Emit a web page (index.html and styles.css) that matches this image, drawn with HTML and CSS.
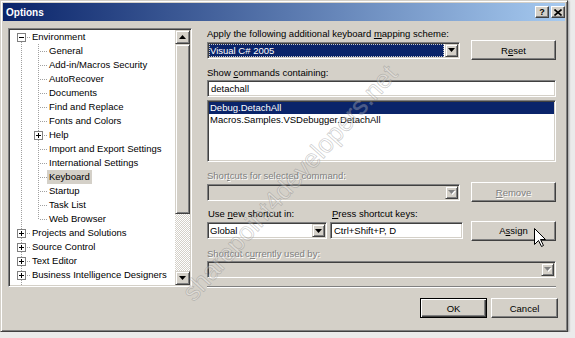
FILE: index.html
```html
<!DOCTYPE html>
<html lang="en">
<head>
  <meta charset="UTF-8">
  <title>Options</title>
  <link rel="stylesheet" href="styles.css">
</head>
<body>

<div class="dialog">
  <div class="titlebar">
    <span class="title">Options</span>
    <div class="caption-btns">
      <span class="cap-btn">?</span>
      <span class="cap-btn"><svg width="8" height="7" viewBox="0 0 8 7"><path d="M0.5 0.5l7 6M7.5 0.5l-7 6" stroke="#000" stroke-width="1.6"/></svg></span>
    </div>
  </div>

  <div class="body">
    <!-- category tree -->
    <div class="tree">
      <div class="tree-items">
        <div class="node"><span class="g g-first"><svg class="box" width="9" height="9" viewBox="0 0 9 9"><rect x="0.5" y="0.5" width="8" height="8" fill="#fff" stroke="#808080"/><path d="M2 4.5h5" stroke="#000"/></svg></span><span class="label">Environment</span></div>
        <div class="node"><span class="g g-pipe"></span><span class="g g-tee"></span><span class="label">General</span></div>
        <div class="node"><span class="g g-pipe"></span><span class="g g-tee"></span><span class="label">Add-in/Macros Security</span></div>
        <div class="node"><span class="g g-pipe"></span><span class="g g-tee"></span><span class="label">AutoRecover</span></div>
        <div class="node"><span class="g g-pipe"></span><span class="g g-tee"></span><span class="label">Documents</span></div>
        <div class="node"><span class="g g-pipe"></span><span class="g g-tee"></span><span class="label">Find and Replace</span></div>
        <div class="node"><span class="g g-pipe"></span><span class="g g-tee"></span><span class="label">Fonts and Colors</span></div>
        <div class="node"><span class="g g-pipe"></span><span class="g g-tee"><svg class="box" width="9" height="9" viewBox="0 0 9 9"><rect x="0.5" y="0.5" width="8" height="8" fill="#fff" stroke="#808080"/><path d="M2 4.5h5M4.5 2v5" stroke="#000"/></svg></span><span class="label">Help</span></div>
        <div class="node"><span class="g g-pipe"></span><span class="g g-tee"></span><span class="label">Import and Export Settings</span></div>
        <div class="node"><span class="g g-pipe"></span><span class="g g-tee"></span><span class="label">International Settings</span></div>
        <div class="node"><span class="g g-pipe"></span><span class="g g-tee"></span><span class="label current">Keyboard</span></div>
        <div class="node"><span class="g g-pipe"></span><span class="g g-tee"></span><span class="label">Startup</span></div>
        <div class="node"><span class="g g-pipe"></span><span class="g g-tee"></span><span class="label">Task List</span></div>
        <div class="node"><span class="g g-pipe"></span><span class="g g-last"></span><span class="label">Web Browser</span></div>
        <div class="node"><span class="g g-mid"><svg class="box" width="9" height="9" viewBox="0 0 9 9"><rect x="0.5" y="0.5" width="8" height="8" fill="#fff" stroke="#808080"/><path d="M2 4.5h5M4.5 2v5" stroke="#000"/></svg></span><span class="label">Projects and Solutions</span></div>
        <div class="node"><span class="g g-mid"><svg class="box" width="9" height="9" viewBox="0 0 9 9"><rect x="0.5" y="0.5" width="8" height="8" fill="#fff" stroke="#808080"/><path d="M2 4.5h5M4.5 2v5" stroke="#000"/></svg></span><span class="label">Source Control</span></div>
        <div class="node"><span class="g g-mid"><svg class="box" width="9" height="9" viewBox="0 0 9 9"><rect x="0.5" y="0.5" width="8" height="8" fill="#fff" stroke="#808080"/><path d="M2 4.5h5M4.5 2v5" stroke="#000"/></svg></span><span class="label">Text Editor</span></div>
        <div class="node"><span class="g g-mid"><svg class="box" width="9" height="9" viewBox="0 0 9 9"><rect x="0.5" y="0.5" width="8" height="8" fill="#fff" stroke="#808080"/><path d="M2 4.5h5M4.5 2v5" stroke="#000"/></svg></span><span class="label">Business Intelligence Designers</span></div>
        <div class="node"><span class="g g-mid"></span></div>
      </div>
      <div class="vscroll">
        <div class="sb-btn"><svg width="7" height="4" viewBox="0 0 7 4"><polygon points="3.5,0 7,4 0,4" fill="#000"/></svg></div>
        <div class="sb-thumb"></div>
        <div class="sb-track"></div>
        <div class="sb-btn"><svg width="7" height="4" viewBox="0 0 7 4"><polygon points="0,0 7,0 3.5,4" fill="#000"/></svg></div>
      </div>
    </div>

    <!-- keyboard page -->
    <div class="panel">
      <div class="lbl">Apply the following additional keyboard <u>m</u>apping scheme:</div>
      <div class="row row-20">
        <div class="combo combo-wide">
          <span class="val selected"><span class="focus">Visual C# 2005</span></span>
          <span class="drop"><svg width="7" height="4" viewBox="0 0 7 4"><polygon points="0,0 7,0 3.5,4" fill="#000"/></svg></span>
        </div>
        <button class="btn">R<u>e</u>set</button>
      </div>

      <div class="lbl mt7">Show <u>c</u>ommands containing:</div>
      <div class="field textbox mt1">detachall</div>
      <div class="field listbox mt3">
        <div class="list-item selected">Debug.DetachAll</div>
        <div class="list-item">Macros.Samples.VSDebugger.DetachAll</div>
      </div>

      <div class="lbl dis mt8">Shor<u>t</u>cuts for selected command:</div>
      <div class="row row-20">
        <div class="combo combo-wide disabled">
          <span class="val"></span>
          <span class="drop"><svg width="8" height="5" viewBox="0 0 8 5"><polygon points="1,1 8,1 4.5,5" fill="#fff"/><polygon points="0,0 7,0 3.5,4" fill="#808080"/></svg></span>
        </div>
        <button class="btn dis"><u>R</u>emove</button>
      </div>

      <div class="grid4 mt6">
        <div class="lbl">Use <u>n</u>ew shortcut in:</div>
        <div class="lbl"><u>P</u>ress shortcut keys:</div>
      </div>
      <div class="grid4 row-21">
        <div class="combo">
          <span class="val">Global</span>
          <span class="drop"><svg width="7" height="4" viewBox="0 0 7 4"><polygon points="0,0 7,0 3.5,4" fill="#000"/></svg></span>
        </div>
        <div class="field textbox">Ctrl+Shift+P, D</div>
        <button class="btn btn-end">A<u>s</u>sign</button>
      </div>

      <div class="lbl dis mt7">Shortcut c<u>u</u>rrently used by:</div>
      <div class="combo disabled mt1">
        <span class="val"></span>
        <span class="drop"><svg width="8" height="5" viewBox="0 0 8 5"><polygon points="1,1 8,1 4.5,5" fill="#fff"/><polygon points="0,0 7,0 3.5,4" fill="#808080"/></svg></span>
      </div>

      <div class="separator mt8"></div>
    </div>
  </div>

  <div class="footer">
    <button class="btn default">OK</button>
    <button class="btn">Cancel</button>
  </div>

  <div class="watermark">sharepoint4developers.net</div>
  <svg class="cursor" width="13" height="20" viewBox="0 0 13 20"><path d="M0.5 0.5V16.5L4.5 12.5L7.5 18.5L9.5 17.5L6.5 11.5H11.5Z" fill="#fff" stroke="#000" stroke-linejoin="miter"/></svg>
</div>

</body>
</html>
```

FILE: styles.css
```css
:root {
  --dot-v: repeating-linear-gradient(to bottom, #a0a0a0 0 1px, transparent 1px 2px);
  --dot-h: repeating-linear-gradient(to right, #a0a0a0 0 1px, transparent 1px 2px);
}

* {
  box-sizing: border-box;
}

body {
  margin: 0;
  background-color: #ebebeb;
  font-family: "Liberation Sans", Arial, sans-serif;
  font-size: 9.5px;
  color: #000;
}

u {
  text-underline-offset: 1px;
}

/* Dialog frame */
.dialog {
  position: relative;
  width: 568px;
  height: 332px;
  padding: 2px;
  background-color: #d4d0c8;
  border: 1px solid;
  border-color: #d4d0c8 #404040 #404040 #d4d0c8;
  box-shadow: inset 1px 1px #fff, inset -1px -1px #808080, 1px 1px 2px rgba(0, 0, 0, 0.35);
  overflow: hidden;
}

.titlebar {
  display: flex;
  justify-content: space-between;
  align-items: center;
  height: 18px;
  padding: 0 0 0 3px;
  background: linear-gradient(to right, #0a246a, #a6caf0);
  color: #fff;
  font-weight: bold;
  font-size: 10px;
}

.caption-btns {
  display: flex;
  gap: 2px;
}

.cap-btn {
  display: flex;
  justify-content: center;
  align-items: center;
  width: 14px;
  height: 12px;
  background-color: #d4d0c8;
  border: 1px solid;
  border-color: #fff #404040 #404040 #fff;
  box-shadow: inset -1px -1px #808080;
  color: #000;
  font-size: 9px;
  font-weight: bold;
}

.body {
  display: flex;
  gap: 15px;
  padding: 7px 0 0 5px;
}

/* Sunken fields */
.tree,
.field,
.combo {
  border: 1px solid;
  border-color: #808080 #fff #fff #808080;
  box-shadow: inset 1px 1px #404040, inset -1px -1px #d4d0c8;
  padding: 1px;
  background-color: #fff;
}

/* Tree view */
.tree {
  display: flex;
  width: 184px;
  height: 259px;
}

.tree-items {
  flex: 1;
  overflow: hidden;
  padding-left: 3px;
}

.node {
  display: flex;
  height: 14px;
  white-space: nowrap;
}

.g {
  flex: none;
  width: 17px;
  height: 14px;
  background-repeat: no-repeat;
}

.g-pipe {
  background: var(--dot-v) 8px 0 / 1px 14px no-repeat;
}

.g-tee,
.g-mid {
  background: var(--dot-v) 8px 0 / 1px 14px no-repeat, var(--dot-h) 10px 7px / 7px 1px no-repeat;
}

.g-last {
  background: var(--dot-v) 8px 0 / 1px 8px no-repeat, var(--dot-h) 10px 7px / 7px 1px no-repeat;
}

.g-first {
  background: var(--dot-v) 8px 8px / 1px 6px no-repeat, var(--dot-h) 10px 7px / 7px 1px no-repeat;
}

.box {
  display: block;
  margin: 3px 0 0 4px;
}

.label {
  padding: 0 2px;
  line-height: 14px;
}

.label.current {
  background-color: #d4d0c8;
}

/* Scrollbar */
.vscroll {
  display: flex;
  flex-direction: column;
  width: 15px;
}

.sb-btn,
.sb-thumb,
.drop {
  background-color: #d4d0c8;
  border: 1px solid;
  border-color: #d4d0c8 #404040 #404040 #d4d0c8;
  box-shadow: inset 1px 1px #fff, inset -1px -1px #808080;
}

.sb-btn {
  display: flex;
  justify-content: center;
  align-items: center;
  height: 14px;
}

.sb-thumb {
  height: 170px;
}

.sb-track {
  flex: 1;
  background: repeating-conic-gradient(#fff 0 25%, #d4d0c8 0 50%) 0 0 / 2px 2px;
}

/* Right page */
.panel {
  display: flex;
  flex-direction: column;
  width: 349px;
}

.lbl {
  height: 12px;
  line-height: 12px;
  white-space: nowrap;
}

.dis,
.btn.dis {
  color: #808080;
  text-shadow: 1px 1px 0 #fff;
}

.mt1 { margin-top: 1px; }
.mt3 { margin-top: 3px; }
.mt6 { margin-top: 6px; }
.mt7 { margin-top: 7px; }
.mt8 { margin-top: 8px; }

.row {
  display: flex;
  justify-content: space-between;
  align-items: center;
}

.row-20 {
  height: 20px;
}

.row-21 {
  height: 21px;
  align-items: center;
}

.grid4 {
  display: grid;
  grid-template-columns: 120px 133px 1fr;
  column-gap: 3px;
}

.grid4 .lbl:first-child {
  padding-left: 1px;
}

.grid4 .lbl:nth-child(2) {
  padding-left: 2px;
}

.textbox {
  height: 17px;
  padding: 1px 3px;
  line-height: 13px;
  white-space: nowrap;
}

.listbox {
  height: 62px;
}

.list-item {
  height: 12px;
  line-height: 12px;
  padding-left: 1px;
  white-space: nowrap;
}

.selected {
  background-color: #0a246a;
  color: #fff;
}

.combo {
  display: flex;
  height: 17px;
}

.combo-wide {
  width: 253px;
}

.combo.disabled {
  background-color: #d4d0c8;
}

.combo .val {
  flex: 1;
  padding-left: 1px;
  line-height: 13px;
  white-space: nowrap;
}

.combo .val.selected {
  margin-right: 1px;
  padding-left: 0;
}

.focus {
  display: block;
  height: 13px;
  padding-left: 1px;
  outline: 1px dotted #c8c8c8;
  outline-offset: -1px;
}

.drop {
  display: flex;
  justify-content: center;
  align-items: center;
  width: 13px;
  height: 13px;
}

.separator {
  height: 2px;
  border-top: 1px solid #808080;
  border-bottom: 1px solid #fff;
}

/* Push buttons */
.btn {
  width: 85px;
  height: 20px;
  padding: 0;
  font: inherit;
  color: #000;
  background-color: #d4d0c8;
  border: 1px solid;
  border-color: #fff #404040 #404040 #fff;
  box-shadow: inset -1px -1px #808080;
}

.btn-end {
  justify-self: end;
}

.btn.default {
  border-color: #000;
  box-shadow: inset 1px 1px #fff, inset -1px -1px #404040, inset -2px -2px #808080;
}

.footer {
  display: flex;
  justify-content: flex-end;
  gap: 4px;
  padding: 10px 7px 0 0;
}

.footer .btn {
  width: 67px;
}

/* Overlays */
.watermark {
  position: absolute;
  left: 289px;
  top: 182px;
  transform: translate(-50%, -50%) rotate(-48deg);
  font-size: 26px;
  white-space: nowrap;
  color: rgba(255, 255, 255, 0.25);
  -webkit-text-stroke: 0.7px rgba(120, 120, 120, 0.4);
  pointer-events: none;
}

.cursor {
  position: absolute;
  left: 533px;
  top: 227px;
}
```
